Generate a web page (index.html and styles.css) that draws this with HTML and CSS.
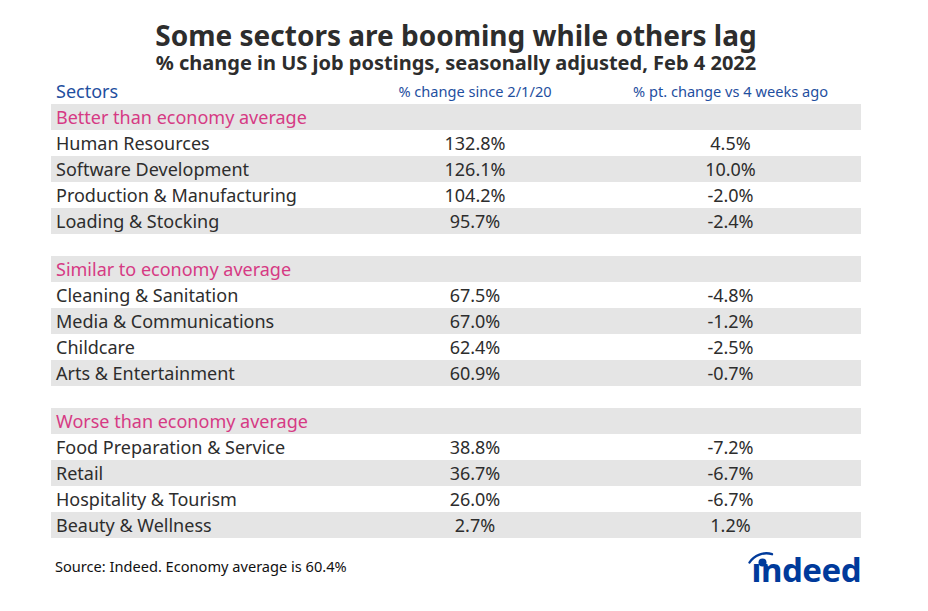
FILE: index.html
```html
<!DOCTYPE html>
<html>
<head>
<meta charset="utf-8">
<link rel="stylesheet" href="styles.css">
</head>
<body>
<div class="page">
  <div class="heading">
    <h1 class="title">Some sectors are booming while others lag</h1>
    <h2 class="subtitle">% change in US job postings, seasonally adjusted, Feb 4 2022</h2>
  </div>
  <div class="table">
    <div class="row head">
      <div class="c name">Sectors</div>
      <div class="c v small">% change since 2/1/20</div>
      <div class="c v small">% pt. change vs 4 weeks ago</div>
    </div>

    <div class="group">
      <div class="row gh"><div class="c name">Better than economy average</div><div class="c"></div><div class="c"></div></div>
      <div class="row"><div class="c name">Human Resources</div><div class="c v">132.8%</div><div class="c v">4.5%</div></div>
      <div class="row"><div class="c name">Software Development</div><div class="c v">126.1%</div><div class="c v">10.0%</div></div>
      <div class="row"><div class="c name">Production &amp; Manufacturing</div><div class="c v">104.2%</div><div class="c v">-2.0%</div></div>
      <div class="row"><div class="c name">Loading &amp; Stocking</div><div class="c v">95.7%</div><div class="c v">-2.4%</div></div>
    </div>

    <div class="group">
      <div class="row gh"><div class="c name">Similar to economy average</div><div class="c"></div><div class="c"></div></div>
      <div class="row"><div class="c name">Cleaning &amp; Sanitation</div><div class="c v">67.5%</div><div class="c v">-4.8%</div></div>
      <div class="row"><div class="c name">Media &amp; Communications</div><div class="c v">67.0%</div><div class="c v">-1.2%</div></div>
      <div class="row"><div class="c name">Childcare</div><div class="c v">62.4%</div><div class="c v">-2.5%</div></div>
      <div class="row"><div class="c name">Arts &amp; Entertainment</div><div class="c v">60.9%</div><div class="c v">-0.7%</div></div>
    </div>

    <div class="group">
      <div class="row gh"><div class="c name">Worse than economy average</div><div class="c"></div><div class="c"></div></div>
      <div class="row"><div class="c name">Food Preparation &amp; Service</div><div class="c v">38.8%</div><div class="c v">-7.2%</div></div>
      <div class="row"><div class="c name">Retail</div><div class="c v">36.7%</div><div class="c v">-6.7%</div></div>
      <div class="row"><div class="c name">Hospitality &amp; Tourism</div><div class="c v">26.0%</div><div class="c v">-6.7%</div></div>
      <div class="row"><div class="c name">Beauty &amp; Wellness</div><div class="c v">2.7%</div><div class="c v">1.2%</div></div>
    </div>
  </div>
  <div class="footer">
    <div class="source">Source: Indeed. Economy average is 60.4%</div>
    <div class="logo">
      <svg class="logo-mark" width="30" height="20" viewBox="0 0 30 20">
        <path d="M1.5 10.5 C 6 3, 16 -0.5, 24 2.2" fill="none" stroke="#003a9b" stroke-width="2.4" stroke-linecap="round"/>
        <circle cx="14.5" cy="10.5" r="4" fill="#003a9b"/>
      </svg>
      <span class="logo-text">ındeed</span>
    </div>
  </div>
</div>
</body>
</html>
```
FILE: styles.css
```css
html, body {
  margin: 0;
  padding: 0;
  background: #ffffff;
}
.page {
  width: 928px;
  height: 611px;
  font-family: "Noto Sans", "Open Sans", sans-serif;
  color: #2d2d2d;
  box-sizing: border-box;
  padding-top: 20px;
}
.heading {
  margin-left: 51px;
  width: 810px;
  text-align: center;
  display: flex;
  flex-direction: column;
  gap: 2px;
}
.title {
  margin: 0;
  font-size: 28px;
  line-height: 30px;
  font-weight: 700;
  color: #2d2d2d;
  white-space: nowrap;
}
.subtitle {
  margin: 0;
  font-size: 20px;
  line-height: 22px;
  font-weight: 700;
  color: #2d2d2d;
  white-space: nowrap;
}
.table {
  margin: 4px 0 0 51px;
  width: 810px;
  display: flex;
  flex-direction: column;
  gap: 22px;
}
.row {
  display: grid;
  grid-template-columns: 299px 250px 261px;
  height: 26px;
  align-items: center;
  font-size: 18px;
  line-height: 24px;
}
.group .row:nth-child(odd) {
  background: #e5e5e5;
}
.head {
  margin-bottom: -22px;
  color: #1f4fa0;
}
.c.name {
  padding-left: 5px;
  white-space: nowrap;
}
.c.v {
  text-align: center;
  white-space: nowrap;
}
.small {
  font-size: 14.6px;
}
.gh .name {
  color: #d63a84;
}
.footer {
  display: flex;
  justify-content: space-between;
  align-items: flex-end;
  margin: 14px 0 0 55px;
  width: 806px;
}
.source {
  font-size: 14.6px;
  line-height: 20px;
  color: #111;
  margin-bottom: 12px;
}
.logo {
  position: relative;
  height: 36px;
  display: flex;
  align-items: flex-end;
}
.logo-mark {
  position: absolute;
  left: -4px;
  top: 0px;
}
.logo-text {
  font-family: "Noto Sans", "Open Sans", sans-serif;
  font-weight: 700;
  font-size: 33px;
  line-height: 36px;
  color: #003a9b;
  letter-spacing: -0.5px;
}
```
